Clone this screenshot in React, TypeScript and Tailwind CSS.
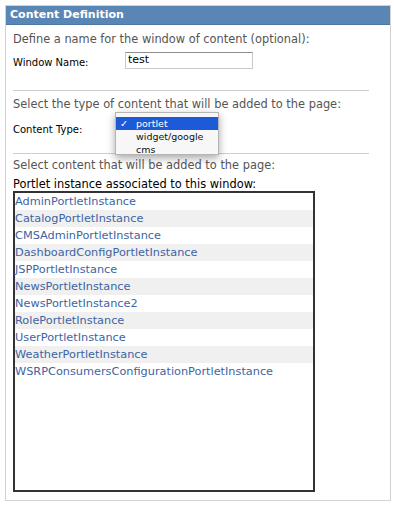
import React from "react";

const items = [
  "AdminPortletInstance",
  "CatalogPortletInstance",
  "CMSAdminPortletInstance",
  "DashboardConfigPortletInstance",
  "JSPPortletInstance",
  "NewsPortletInstance",
  "NewsPortletInstance2",
  "RolePortletInstance",
  "UserPortletInstance",
  "WeatherPortletInstance",
  "WSRPConsumersConfigurationPortletInstance",
];

export default function App() {
  return (
    <div
      className="relative w-[394px] h-[505px] bg-white pt-[5px] pl-[5px] pr-[3px] pb-[4px]"
      style={{ fontFamily: '"DejaVu Sans", Verdana, sans-serif' }}
    >
      <div className="h-full border border-[#d2d2d2] flex flex-col">
        <div className="h-[19px] bg-[#5a86b5] border-b border-[#4b77a4] text-white font-bold text-[11px] leading-[18px] pl-[4px]">
          Content Definition
        </div>
        <div className="px-[7px] flex flex-col">
          <div className="mt-[7px] h-[15px] leading-[15px] text-[11.4px] text-[#555]">
            Define a name for the window of content (optional):
          </div>
          <div className="mt-[5px] h-[17px] flex items-center">
            <span className="w-[112px] text-[10px] text-black leading-[17px] pt-[3px]">Window Name:</span>
            <div className="w-[128px] h-[17px] border border-[#c8c8c8] border-t-[#8c8c8c] text-[11px] leading-[14px] pl-[2px] text-black">
              test
            </div>
          </div>
          <div className="mt-[21px] h-px bg-[#cfcfcf] mr-[14px]" />
          <div className="mt-[6px] h-[15px] leading-[15px] text-[11.4px] text-[#555]">
            Select the type of content that will be added to the page:
          </div>
          <div className="mt-[10px] h-[15px] leading-[15px] text-[10px] text-black">Content Type:</div>
          <div className="mt-[16px] h-px bg-[#cfcfcf] mr-[14px]" />
          <div className="mt-[4px] h-[15px] leading-[15px] text-[11.4px] text-[#555]">
            Select content that will be added to the page:
          </div>
          <div className="mt-[5px] h-[13px] leading-[13px] text-[11.4px] text-black">
            Portlet instance associated to this window:
          </div>
          <div className="w-[302px] h-[301px] border-2 border-[#333]">
            {items.map((it, i) => (
              <div
                key={it}
                className={`h-[17px] leading-[17px] text-[11.3px] text-[#3d64a3] ${i % 2 === 1 ? "bg-[#f0f0f0]" : "bg-white"}`}
              >
                {it}
              </div>
            ))}
          </div>
        </div>
      </div>
      <div
        className="absolute left-[115px] top-[112px] w-[104px] h-[43px] bg-[#f7f7f7] border border-[#b5b5b5] shadow-[0_3px_8px_rgba(0,0,0,0.35)] pt-[4px] text-[9.5px] text-[#111]"
        style={{ fontFamily: '"DejaVu Sans", "Lucida Grande", sans-serif' }}
      >
        <div className="h-[13px] leading-[13px] bg-[#1d5ad8] text-white flex">
          <span className="w-[20px] pl-[4px] font-bold">✓</span>
          <span>portlet</span>
        </div>
        <div className="h-[13px] leading-[13px] pl-[20px]">widget/google</div>
        <div className="h-[13px] leading-[13px] pl-[20px]">cms</div>
      </div>
    </div>
  );
}
